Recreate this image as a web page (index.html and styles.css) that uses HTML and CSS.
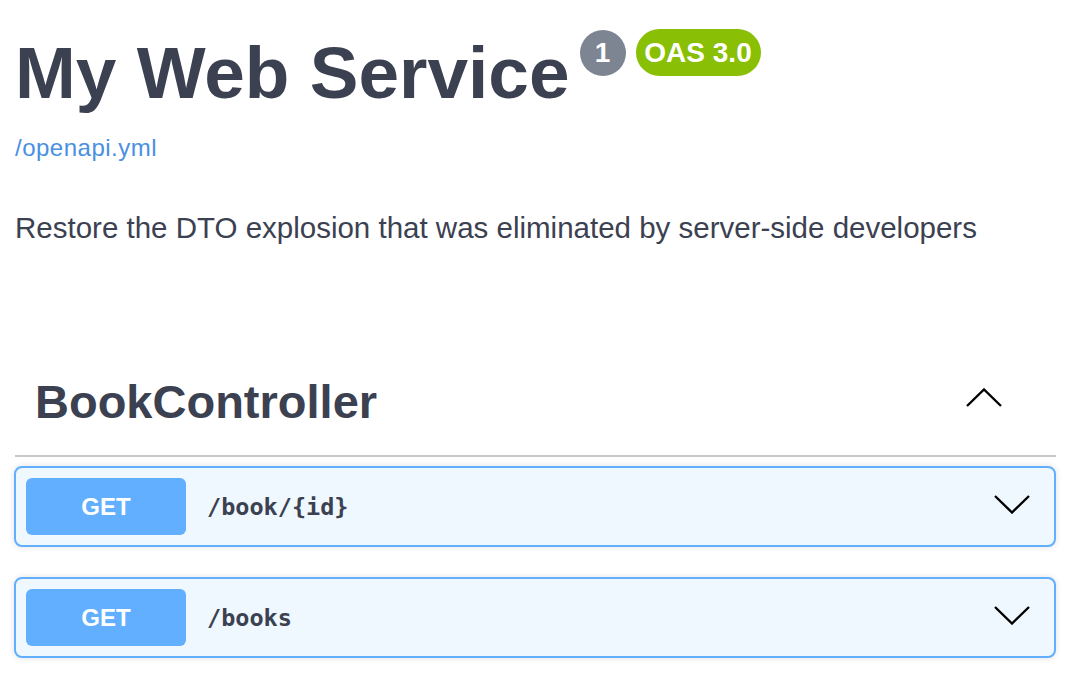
FILE: index.html
```html
<!DOCTYPE html>
<html lang="en">
<head>
<meta charset="utf-8">
<title>My Web Service</title>
<link rel="stylesheet" href="styles.css">
</head>
<body>
<div class="page">
  <section class="info">
    <div class="title-row">
      <h1 class="title">My Web Service</h1>
      <span class="badge badge-version">1</span>
      <span class="badge badge-oas">OAS 3.0</span>
    </div>
    <a class="spec-link" href="#">/openapi.yml</a>
    <p class="description">Restore the DTO explosion that was eliminated by server-side developers</p>
  </section>

  <section class="tag-section">
    <div class="tag-header">
      <h3 class="tag-name">BookController</h3>
      <svg class="chevron-up" width="36" height="20" viewBox="0 0 36 20"><polyline points="1,18 18,1.5 35,18" fill="none" stroke="#000" stroke-width="2.4"/></svg>
    </div>
    <div class="opblock">
      <span class="method">GET</span>
      <span class="path">/book/{id}</span>
      <svg class="chevron-down" width="36" height="20" viewBox="0 0 36 20"><polyline points="1,2 18,18.5 35,2" fill="none" stroke="#000" stroke-width="2.4"/></svg>
    </div>
    <div class="opblock">
      <span class="method">GET</span>
      <span class="path">/books</span>
      <svg class="chevron-down" width="36" height="20" viewBox="0 0 36 20"><polyline points="1,2 18,18.5 35,2" fill="none" stroke="#000" stroke-width="2.4"/></svg>
    </div>
  </section>
</div>
</body>
</html>
```

FILE: styles.css
```css
html, body {
  margin: 0;
  padding: 0;
  background: #ffffff;
}

body {
  font-family: "Liberation Sans", Arial, sans-serif;
  color: #3b4151;
  overflow: hidden;
}

.page {
  padding: 30px 18px 0 15px;
}

.title-row {
  display: flex;
  align-items: flex-start;
}

.title {
  margin: 0;
  font-size: 73px;
  line-height: 86px;
  font-weight: 700;
  color: #3b4151;
}

.badge {
  display: inline-flex;
  align-items: center;
  justify-content: center;
  color: #ffffff;
  font-weight: 700;
  font-size: 28px;
  height: 47px;
  border-radius: 24px;
  margin-top: -1px;
}

.badge-version {
  width: 46px;
  height: 46px;
  background: #7d8492;
  margin-left: 10px;
  margin-top: 0;
}

.badge-oas {
  background: #89bf04;
  padding: 0 8px;
  width: 125px;
  box-sizing: border-box;
  margin-left: 10px;
}

.spec-link {
  display: block;
  margin-top: 17px;
  font-size: 24px;
  line-height: 29px;
  letter-spacing: 0.5px;
  color: #4990e2;
  text-decoration: none;
}

.description {
  margin: 48px 0 0;
  font-size: 29.5px;
  line-height: 35px;
  color: #3b4151;
}

.tag-section {
  margin-top: 109px;
}

.tag-header {
  display: flex;
  align-items: center;
  justify-content: space-between;
  padding: 20px 54px 25px 20px;
  border-bottom: 2px solid #c6c8cc;
}

.tag-name {
  margin: 0;
  font-size: 47px;
  line-height: 56px;
  font-weight: 700;
  color: #3b4151;
}

.chevron-up {
  display: block;
  margin-top: -8px;
}

.opblock {
  display: flex;
  align-items: center;
  margin: 9px 0 30px -1px;
  padding: 10px 24px 10px 10px;
  border: 2px solid #61affe;
  border-radius: 8px;
  background: #eff7ff;
  box-shadow: 0 0 6px rgba(0, 0, 0, 0.12);
}

.opblock + .opblock {
  margin-top: 0;
}

.method {
  display: flex;
  align-items: center;
  justify-content: center;
  width: 160px;
  height: 57px;
  border-radius: 6px;
  background: #61affe;
  color: #ffffff;
  font-weight: 700;
  font-size: 24px;
}

.path {
  flex: 1;
  margin-left: 21px;
  font-family: "DejaVu Sans Mono", "Liberation Mono", monospace;
  font-weight: 700;
  font-size: 23.5px;
  color: #3b4151;
}

.chevron-down {
  display: block;
  margin-top: -6px;
}
```
